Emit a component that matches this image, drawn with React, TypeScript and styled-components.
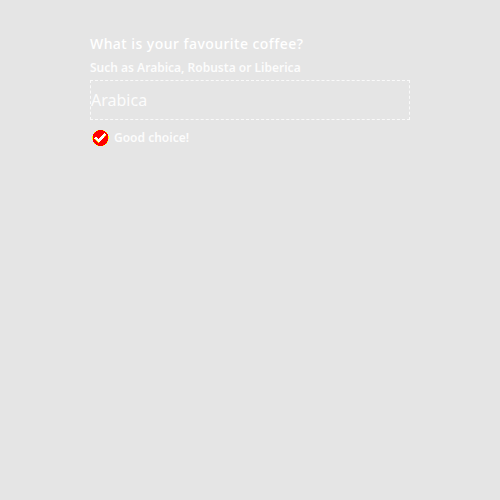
import React from "react";
import styled, { createGlobalStyle } from "styled-components";

const GlobalStyle = createGlobalStyle`
  * { box-sizing: border-box; }
  body { margin: 0; background: #e5e5e5; font-family: "Noto Sans", sans-serif; color: #fcfcfc; }
`;
const Page = styled.main`
  min-height: 100vh;
  padding: 36px 90px 0;
`;
const Field = styled.div`
  display: flex;
  flex-direction: column;
  width: 320px;
`;
const Label = styled.label`
  font-size: 14px;
  line-height: 16px;
  font-weight: 500;
  letter-spacing: 0.46px;
  color: #fff;
`;
const Hint = styled.span`
  margin-top: 8px;
  font-size: 12px;
  line-height: 16px;
  font-weight: 600;
`;
const Input = styled.input`
  margin-top: 4px;
  width: 100%;
  height: 40px;
  padding: 0;
  border: 1px dashed #fafafa;
  border-radius: 0;
  background: transparent;
  color: #fcfcfc;
  font: 400 16px/24px "Noto Sans", sans-serif;
  outline: none;
`;
const Message = styled.div`
  display: flex;
  align-items: center;
  gap: 4px;
  margin-top: 8px;
  height: 20px;
  font-size: 12px;
  line-height: 16px;
  font-weight: 600;
`;

const SuccessIcon = () => (
  <svg width="20" height="20" viewBox="0 0 20 20" shapeRendering="crispEdges">
    <circle cx="10.5" cy="10" r="8.3" fill="#ff0" />
    <circle cx="10.5" cy="10" r="7.9" fill="#f00" />
    <path d="m5.2 9.8 3.5 3.4 6.9-7.1" fill="none" stroke="#ff0" strokeWidth="3" />
    <path d="m5.2 9.7 3.5 3.2 6.7-6.9" fill="none" stroke="#fff" strokeWidth="2.2" />
  </svg>
);

export default function App() {
  return (
    <Page>
      <GlobalStyle />
      <Field>
        <Label htmlFor="coffee">What is your favourite coffee?</Label>
        <Hint>Such as Arabica, Robusta or Liberica</Hint>
        <Input id="coffee" defaultValue="Arabica" />
        <Message><SuccessIcon /><span>Good choice!</span></Message>
      </Field>
    </Page>
  );
}
